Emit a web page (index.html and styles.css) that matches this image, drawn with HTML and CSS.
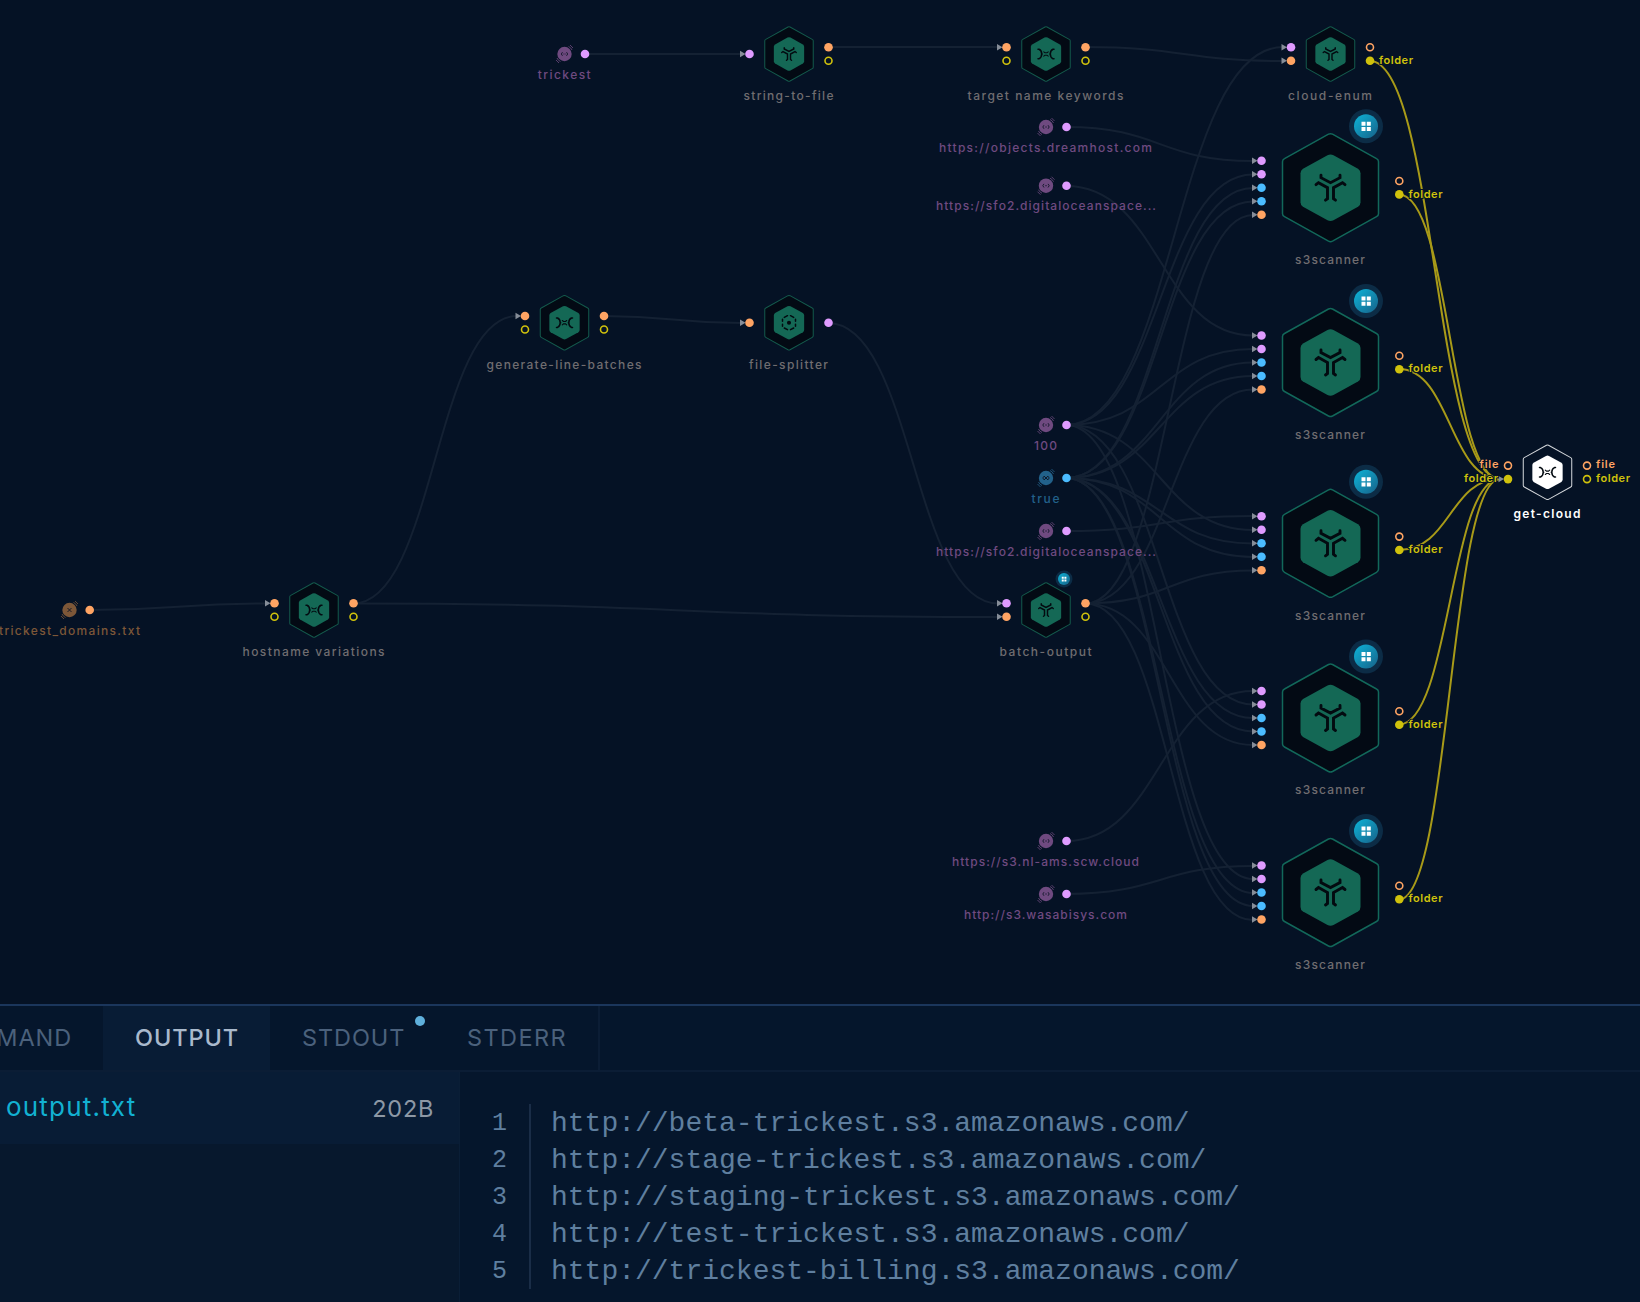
FILE: index.html
```
<!DOCTYPE html>
<html lang="en">

<head>
    <meta charset="UTF-8">
    <meta name="viewport" content="width=device-width, initial-scale=1.0">
    <title>Workflow</title>
    <link rel="stylesheet" href="styles.css">
</head>

<body>
    <div class="app">
        <svg class="graph" viewBox="0 0 1640 1004" width="1640" height="1004">
            <defs>
                <linearGradient id="badgeFill" x1="0" y1="0" x2="1" y2="1">
                    <stop offset="0" stop-color="#0db4d8" />
                    <stop offset="1" stop-color="#176289" />
                </linearGradient>

                <path id="outer" d="M-2-53.5Q0-54.5 2-53.5L46-29Q48-28 48-26V26Q48 28 46 29L2 53.5Q0 54.5-2 53.5L-46 29Q-48 28-48 26V-26Q-48-28-46-29Z" />
                <path id="inner" d="M-3-32.5Q0-34 3-32.5L27.5-19Q30-17.5 30-14.5V14.5Q30 17.5 27.5 19L3 32.5Q0 34-3 32.5L-27.5 19Q-30 17.5-30 14.5V-14.5Q-30-17.5-27.5-19Z" />

                <g id="fork" class="glyph">
                    <path d="M-9.5-12.5V-10L0-5L9.5-10V-12.5" />
                    <path d="M-14.5-3L-12-5L-3 0V11L-5 12.5" />
                    <path d="M14.5-3L12-5L3 0V11L5 12.5" />
                </g>
                <g id="merge" class="glyph thin">
                    <path d="M-8-4.7H-7Q-4.3-3.5-4.3 0Q-4.3 3.5-7 4.7H-8M-4.3 0H-3.8" />
                    <path d="M8-4.7H7Q4.3-3.5 4.3 0Q4.3 3.5 7 4.7H8M4.3 0H3.8" />
                    <path class="fine" d="M-2.2-2.2L-1-1.2H1L2.2-2.2M-2.2 2.2L-1 1.2H1L2.2 2.2" />
                </g>
                <g id="split" class="glyph thin">
                    <path d="M-4.7-5.3L-1.5-7M1.5-7L4.7-5.3M6.5-3.5V-1.5M6.5 1.5V3.5M4.7 5.3L1.5 7M-1.5 7L-4.7 5.3M-6.5 3.5V1.5M-6.5-1.5V-3.5" />
                    <circle r="1.3" />
                </g>

                <g id="tool">
                    <use href="#outer" class="shell" transform="scale(.505)" />
                    <use href="#inner" class="core" transform="scale(.505)" />
                </g>
                <g id="badge">
                    <circle r="17" class="halo" />
                    <circle r="12" fill="url(#badgeFill)" />
                    <path class="tiles" d="M-4.5-4.5h4v4h-4zM.8-4.5h4v4h-4zM-4.5 .8h4v4h-4zM.8 .8h4v4h-4z" />
                </g>
                <g id="scanner">
                    <use href="#outer" class="shell big" />
                    <use href="#inner" class="core" />
                    <use href="#fork" />
                    <use href="#badge" x="35.5" y="-61.5" />
                    <use href="#arrow" x="-69" y="-27" />
                    <use href="#arrow" x="-69" y="-13.5" />
                    <use href="#arrow" x="-69" y="0" />
                    <use href="#arrow" x="-69" y="13.5" />
                    <use href="#arrow" x="-69" y="27" />
                    <use href="#port" class="string" x="-69" y="-27" />
                    <use href="#port" class="string" x="-69" y="-13.5" />
                    <use href="#port" class="bool" x="-69" y="0" />
                    <use href="#port" class="bool" x="-69" y="13.5" />
                    <use href="#port" class="file" x="-69" y="27" />
                    <use href="#ring" class="file" x="68.8" y="-6.7" />
                    <use href="#port" class="folder" x="68.8" y="6.7" />
                    <text class="port-label folder" x="78" y="9.8" textLength="34">folder</text>
                    <text class="label" x="-.5" y="76.3" textLength="70">s3scanner</text>
                </g>
                <g id="param">
                    <circle r="7.2" class="disc" />
                    <path class="orbit" d="M4-7.5Q6.5-6.5 7.5-4M5.5-9L8.5-6M-4 7.5Q-6.5 6.5-7.5 4M-5.5 9L-8.5 6" />
                </g>
                <path id="brackets" class="mark" d="M-2-1.8L-3.2 0L-2 1.8M2-1.8L3.2 0L2 1.8M-1 0H-.3M.3 0H1" />
                <path id="cross" class="mark" d="M-2-2L2 2M2-2L-2 2" />

                <circle id="port" r="4.3" />
                <circle id="ring" r="3.5" class="ring" />
                <path id="arrow" class="arrow" d="M-9.5-3.2L-4 0L-9.5 3.2Z" />
            </defs>

            <!-- connections -->
            <g class="edges">
                <path d="M585 54H741" />
                <path d="M828 47H998" />
                <path d="M1085 47C1184 47 1184 61 1283 61" />
                <path d="M89 610C178 610 178 603.5 266 603.5" />
                <path d="M353 603.5C435 603.5 435 316 517 316" />
                <path d="M353 603.5C676 603.5 676 617 998 617" />
                <path d="M604 316C673 316 673 323 741 323" />
                <path d="M828 323C913 323 913 603.5 998 603.5" />
                <path d="M1066 127C1160 127 1160 161 1253 161" />
                <path d="M1066 186C1160 186 1160 335.5 1253 335.5" />
                <path d="M1066 531C1160 531 1160 516 1253 516" />
                <path d="M1066 841C1160 841 1160 691 1253 691" />
                <path d="M1066 894C1160 894 1160 866 1253 866" />

                <path d="M1066 425C1174 425 1174 47 1283 47" />
                <path d="M1066 425C1160 425 1160 174.5 1253 174.5" />
                <path d="M1066 425C1160 425 1160 349 1253 349" />
                <path d="M1066 425C1160 425 1160 530 1253 530" />
                <path d="M1066 425C1160 425 1160 704.5 1253 704.5" />
                <path d="M1066 425C1160 425 1160 879 1253 879" />

                <path d="M1066 478C1160 478 1160 188 1253 188" />
                <path d="M1066 478C1160 478 1160 201.5 1253 201.5" />
                <path d="M1066 478C1160 478 1160 362.5 1253 362.5" />
                <path d="M1066 478C1160 478 1160 376 1253 376" />
                <path d="M1066 478C1160 478 1160 543.5 1253 543.5" />
                <path d="M1066 478C1160 478 1160 557 1253 557" />
                <path d="M1066 478C1160 478 1160 718 1253 718" />
                <path d="M1066 478C1160 478 1160 731.5 1253 731.5" />
                <path d="M1066 478C1160 478 1160 893 1253 893" />
                <path d="M1066 478C1160 478 1160 906 1253 906" />

                <path d="M1085 603.5C1169 603.5 1169 215 1253 215" />
                <path d="M1085 603.5C1169 603.5 1169 389.5 1253 389.5" />
                <path d="M1085 603.5C1169 603.5 1169 570.5 1253 570.5" />
                <path d="M1085 603.5C1169 603.5 1169 745 1253 745" />
                <path d="M1085 603.5C1169 603.5 1169 920 1253 920" />
            </g>
            <g class="edges active">
                <path d="M1370 61C1435 61 1435 479 1500 479" />
                <path d="M1399 194.5C1450 194.5 1450 479 1500 479" />
                <path d="M1399 369C1450 369 1450 479 1500 479" />
                <path d="M1399 550C1450 550 1450 479 1500 479" />
                <path d="M1399 724.5C1450 724.5 1450 479 1500 479" />
                <path d="M1399 899.5C1450 899.5 1450 479 1500 479" />
            </g>

            <!-- parameters -->
            <g class="string">
                <g transform="translate(564.5 54)">
                    <use href="#param" /><use href="#brackets" /><use href="#port" x="20.5" />
                    <text class="label" x="-.3" y="25" textLength="53">trickest</text>
                </g>
                <g transform="translate(1046 127)">
                    <use href="#param" /><use href="#brackets" /><use href="#port" x="20.5" />
                    <text class="label" x="-.5" y="25" textLength="213">https://objects.dreamhost.com</text>
                </g>
                <g transform="translate(1046 185.7)">
                    <use href="#param" /><use href="#brackets" /><use href="#port" x="20.5" />
                    <text class="label" y="24.5" textLength="220">https://sfo2.digitaloceanspace...</text>
                </g>
                <g transform="translate(1046 425)">
                    <use href="#param" /><use href="#brackets" /><use href="#port" x="20.5" />
                    <text class="label" x="-.5" y="25" textLength="23">100</text>
                </g>
                <g transform="translate(1046 531)">
                    <use href="#param" /><use href="#brackets" /><use href="#port" x="20.5" />
                    <text class="label" y="25" textLength="220">https://sfo2.digitaloceanspace...</text>
                </g>
                <g transform="translate(1046 841)">
                    <use href="#param" /><use href="#brackets" /><use href="#port" x="20.5" />
                    <text class="label" x="-.5" y="25" textLength="187">https://s3.nl-ams.scw.cloud</text>
                </g>
                <g transform="translate(1046 894)">
                    <use href="#param" /><use href="#brackets" /><use href="#port" x="20.5" />
                    <text class="label" x="-.5" y="25" textLength="163">http://s3.wasabisys.com</text>
                </g>
            </g>
            <g class="bool" transform="translate(1046 478)">
                <use href="#param" /><use href="#cross" /><use href="#brackets" /><use href="#port" x="20.5" />
                <text class="label" x="-.5" y="25" textLength="28">true</text>
            </g>
            <g class="file" transform="translate(69.5 610)">
                <use href="#param" /><use href="#cross" /><use href="#port" x="20.2" />
                <text class="label" x="0" y="25" textLength="141">trickest_domains.txt</text>
            </g>

            <!-- tools -->
            <g transform="translate(789 54)">
                <use href="#tool" /><use href="#fork" transform="scale(.5)" />
                <use href="#arrow" x="-39.5" /><use href="#port" class="string" x="-39.5" />
                <use href="#port" class="file" x="39.5" y="-6.7" /><use href="#ring" class="folder" x="39.5" y="6.8" />
                <text class="label" x="-.5" y="46" textLength="90">string-to-file</text>
            </g>
            <g transform="translate(1046 54)">
                <use href="#tool" /><use href="#merge" />
                <use href="#arrow" x="-39.5" y="-6.7" /><use href="#port" class="file" x="-39.5" y="-6.7" /><use href="#ring" class="folder" x="-39.5" y="6.8" />
                <use href="#port" class="file" x="39.5" y="-6.7" /><use href="#ring" class="folder" x="39.5" y="6.8" />
                <text class="label" x="-.5" y="46" textLength="156">target name keywords</text>
            </g>
            <g transform="translate(1330.5 54)">
                <use href="#tool" /><use href="#fork" transform="scale(.5)" />
                <use href="#arrow" x="-39.5" y="-6.7" /><use href="#port" class="string" x="-39.5" y="-6.7" />
                <use href="#arrow" x="-39.5" y="6.8" /><use href="#port" class="file" x="-39.5" y="6.8" />
                <use href="#ring" class="file" x="39.5" y="-6.7" /><use href="#port" class="folder" x="39.5" y="6.8" />
                <text class="port-label folder" x="48.5" y="10" textLength="34">folder</text>
                <text class="label" x="-.5" y="46" textLength="84">cloud-enum</text>
            </g>
            <g transform="translate(564.5 322.7)">
                <use href="#tool" /><use href="#merge" />
                <use href="#arrow" x="-39.5" y="-6.7" /><use href="#port" class="file" x="-39.5" y="-6.7" /><use href="#ring" class="folder" x="-39.5" y="6.8" />
                <use href="#port" class="file" x="39.5" y="-6.7" /><use href="#ring" class="folder" x="39.5" y="6.8" />
                <text class="label" x="-.5" y="46" textLength="155">generate-line-batches</text>
            </g>
            <g transform="translate(789 322.7)">
                <use href="#tool" /><use href="#split" />
                <use href="#arrow" x="-39.5" /><use href="#port" class="file" x="-39.5" />
                <use href="#port" class="string" x="39.5" />
                <text class="label" x="-.5" y="46" textLength="79">file-splitter</text>
            </g>
            <g transform="translate(314 610)">
                <use href="#tool" /><use href="#merge" />
                <use href="#arrow" x="-39.5" y="-6.7" /><use href="#port" class="file" x="-39.5" y="-6.7" /><use href="#ring" class="folder" x="-39.5" y="6.8" />
                <use href="#port" class="file" x="39.5" y="-6.7" /><use href="#ring" class="folder" x="39.5" y="6.8" />
                <text class="label" x="-.5" y="46" textLength="142">hostname variations</text>
            </g>
            <g transform="translate(1046 610)">
                <use href="#tool" /><use href="#fork" transform="scale(.5)" />
                <use href="#badge" transform="translate(18 -31) scale(.5)" />
                <use href="#arrow" x="-39.5" y="-6.7" /><use href="#port" class="string" x="-39.5" y="-6.7" />
                <use href="#arrow" x="-39.5" y="6.8" /><use href="#port" class="file" x="-39.5" y="6.8" />
                <use href="#port" class="file" x="39.5" y="-6.7" /><use href="#ring" class="folder" x="39.5" y="6.8" />
                <text class="label" x="-.5" y="46" textLength="92">batch-output</text>
            </g>

            <use href="#scanner" x="1330.5" y="187.7" />
            <use href="#scanner" x="1330.5" y="362.5" />
            <use href="#scanner" x="1330.5" y="543.3" />
            <use href="#scanner" x="1330.5" y="718" />
            <use href="#scanner" x="1330.5" y="892.5" />

            <g class="selected" transform="translate(1547.5 472.3)">
                <use href="#tool" /><use href="#merge" />
                <use href="#arrow" x="-39.5" y="6.8" />
                <use href="#ring" class="file" x="-39.5" y="-6.7" /><use href="#port" class="folder" x="-39.5" y="6.8" />
                <use href="#ring" class="file" x="39.5" y="-6.7" /><use href="#ring" class="folder" x="39.5" y="6.8" />
                <text class="port-label file" x="-68" y="-4" textLength="19">file</text>
                <text class="port-label folder" x="-83.5" y="10" textLength="34">folder</text>
                <text class="port-label file" x="48.5" y="-4" textLength="19">file</text>
                <text class="port-label folder" x="48.5" y="10" textLength="34">folder</text>
                <text class="label" x="-.5" y="45.5" textLength="67">get-cloud</text>
            </g>
        </svg>

        <div class="panel">
            <div class="tabs">
                <div class="tab command">COMMAND</div>
                <div class="tab output selected-tab">OUTPUT</div>
                <div class="tab stdout">STDOUT<span class="dot"></span></div>
                <div class="tab stderr">STDERR</div>
            </div>
            <div class="content">
                <div class="files">
                    <div class="file-row">
                        <span class="name">output.txt</span>
                        <span class="size">202B</span>
                    </div>
                </div>
                <div class="viewer">
                    <div class="numbers">
                        <p>1</p>
                        <p>2</p>
                        <p>3</p>
                        <p>4</p>
                        <p>5</p>
                    </div>
                    <div class="lines">
                        <p>http://beta-trickest.s3.amazonaws.com/</p>
                        <p>http://stage-trickest.s3.amazonaws.com/</p>
                        <p>http://staging-trickest.s3.amazonaws.com/</p>
                        <p>http://test-trickest.s3.amazonaws.com/</p>
                        <p>http://trickest-billing.s3.amazonaws.com/</p>
                    </div>
                </div>
            </div>
        </div>
    </div>
</body>

</html>
```
FILE: styles.css
```
* {
    margin: 0;
    padding: 0;
    box-sizing: border-box;
}

body {
    background: #051225;
    font-family: "Inter", sans-serif;
    overflow: hidden;
}

.app {
    width: 1640px;
    height: 1302px;
    display: flex;
    flex-direction: column;
}

/* graph */

.graph {
    display: block;
    flex: none;
}

.edges path {
    fill: none;
    stroke: #142133;
    stroke-width: 2;
}

.edges.active path {
    stroke: #a89a18;
}

.string {
    fill: #df9bff;
    stroke: #df9bff;
    --dim: #6f4a80;
}

.bool {
    fill: #4bbcff;
    stroke: #4bbcff;
    --dim: #22618a;
}

.file {
    fill: #ffa463;
    stroke: #ffa463;
    --dim: #7d5738;
}

.folder {
    fill: #d0c20c;
    stroke: #d0c20c;
}

#port {
    stroke: none;
}

.ring {
    fill: #051225;
    stroke-width: 1.6;
}

.arrow {
    fill: #868d98;
    stroke: none;
}

.shell {
    fill: var(--shell, #030a14);
    stroke: var(--line, #145a4c);
    stroke-width: 2;
}

.shell.big {
    stroke: #12685a;
    stroke-width: 1.5;
}

.core {
    fill: var(--core, #146855);
    stroke: none;
}

.glyph {
    fill: none;
    stroke: #030a10;
    stroke-width: 2.9;
    stroke-linecap: round;
}

.glyph.thin {
    stroke-width: 1.5;
}

.glyph .fine {
    stroke-width: 1.1;
}

.glyph circle {
    fill: #030a10;
}

.halo {
    fill: #0c2c46;
    stroke: none;
}

.tiles {
    fill: #fff;
    stroke: none;
}

.disc {
    fill: var(--dim);
    stroke: none;
}

.orbit {
    fill: none;
    stroke: var(--dim);
    stroke-width: .8;
}

.mark {
    fill: none;
    stroke: #0d1526;
    stroke-width: .9;
}

.label {
    font-size: 12px;
    font-weight: 500;
    text-anchor: middle;
    fill: var(--dim, #706d70);
    stroke: none;
}

.port-label {
    font-size: 11px;
    font-weight: 600;
    stroke: #051225;
    stroke-width: 2;
    paint-order: stroke;
}

.selected {
    --shell: #051225;
    --line: #d5d8dc;
    --core: #fff;
}

.selected .label {
    fill: #fff;
    font-weight: 600;
}

/* bottom panel */

.panel {
    flex: 1;
    display: flex;
    flex-direction: column;
    background: #05162c;
    border-top: 2px solid #1b365c;
}

.tabs {
    display: flex;
    height: 66px;
    border-bottom: 2px solid #0b1d35;
}

.tab {
    font-size: 23.5px;
    line-height: 64px;
    letter-spacing: .9px;
    color: #4b617c;
    white-space: nowrap;
}

.command {
    width: 103px;
    display: flex;
    justify-content: flex-end;
    padding-right: 31px;
}

.output {
    width: 167px;
    padding-left: 32px;
}

.selected-tab {
    background: #081c35;
    color: #a9b9cc;
    font-weight: 500;
}

.stdout {
    width: 165px;
    padding-left: 32px;
    display: flex;
}

.dot {
    width: 10px;
    height: 10px;
    border-radius: 50%;
    background: #5fb0dc;
    margin: 10px 0 0 10px;
}

.stderr {
    width: 165px;
    padding-left: 32px;
    letter-spacing: 1.4px;
    border-right: 2px solid #0b1d35;
}

.content {
    flex: 1;
    display: flex;
}

.files {
    width: 460px;
    background: #07182d;
    border-right: 1px solid #0a1e36;
}

.file-row {
    height: 72px;
    padding: 0 25px 0 6px;
    display: flex;
    align-items: center;
    justify-content: space-between;
    background: #081c35;
}

.name {
    font-size: 26px;
    letter-spacing: 1.2px;
    line-height: 30px;
    padding-bottom: 2px;
    color: #12b1d2;
}

.size {
    font-size: 23.5px;
    letter-spacing: .7px;
    color: #8d98a5;
}

.viewer {
    flex: 1;
    display: flex;
    align-items: flex-start;
    padding-top: 32px;
    font-family: "Liberation Mono", monospace;
    line-height: 37px;
    color: #5f7f9f;
}

.numbers,
.lines {
    height: 185px;
    padding-top: 1px;
}

.numbers {
    width: 71px;
    padding-right: 22px;
    border-right: 2px solid #1a2d47;
    text-align: right;
    font-size: 25px;
}

.lines {
    padding-left: 20px;
    font-size: 28px;
}
```
